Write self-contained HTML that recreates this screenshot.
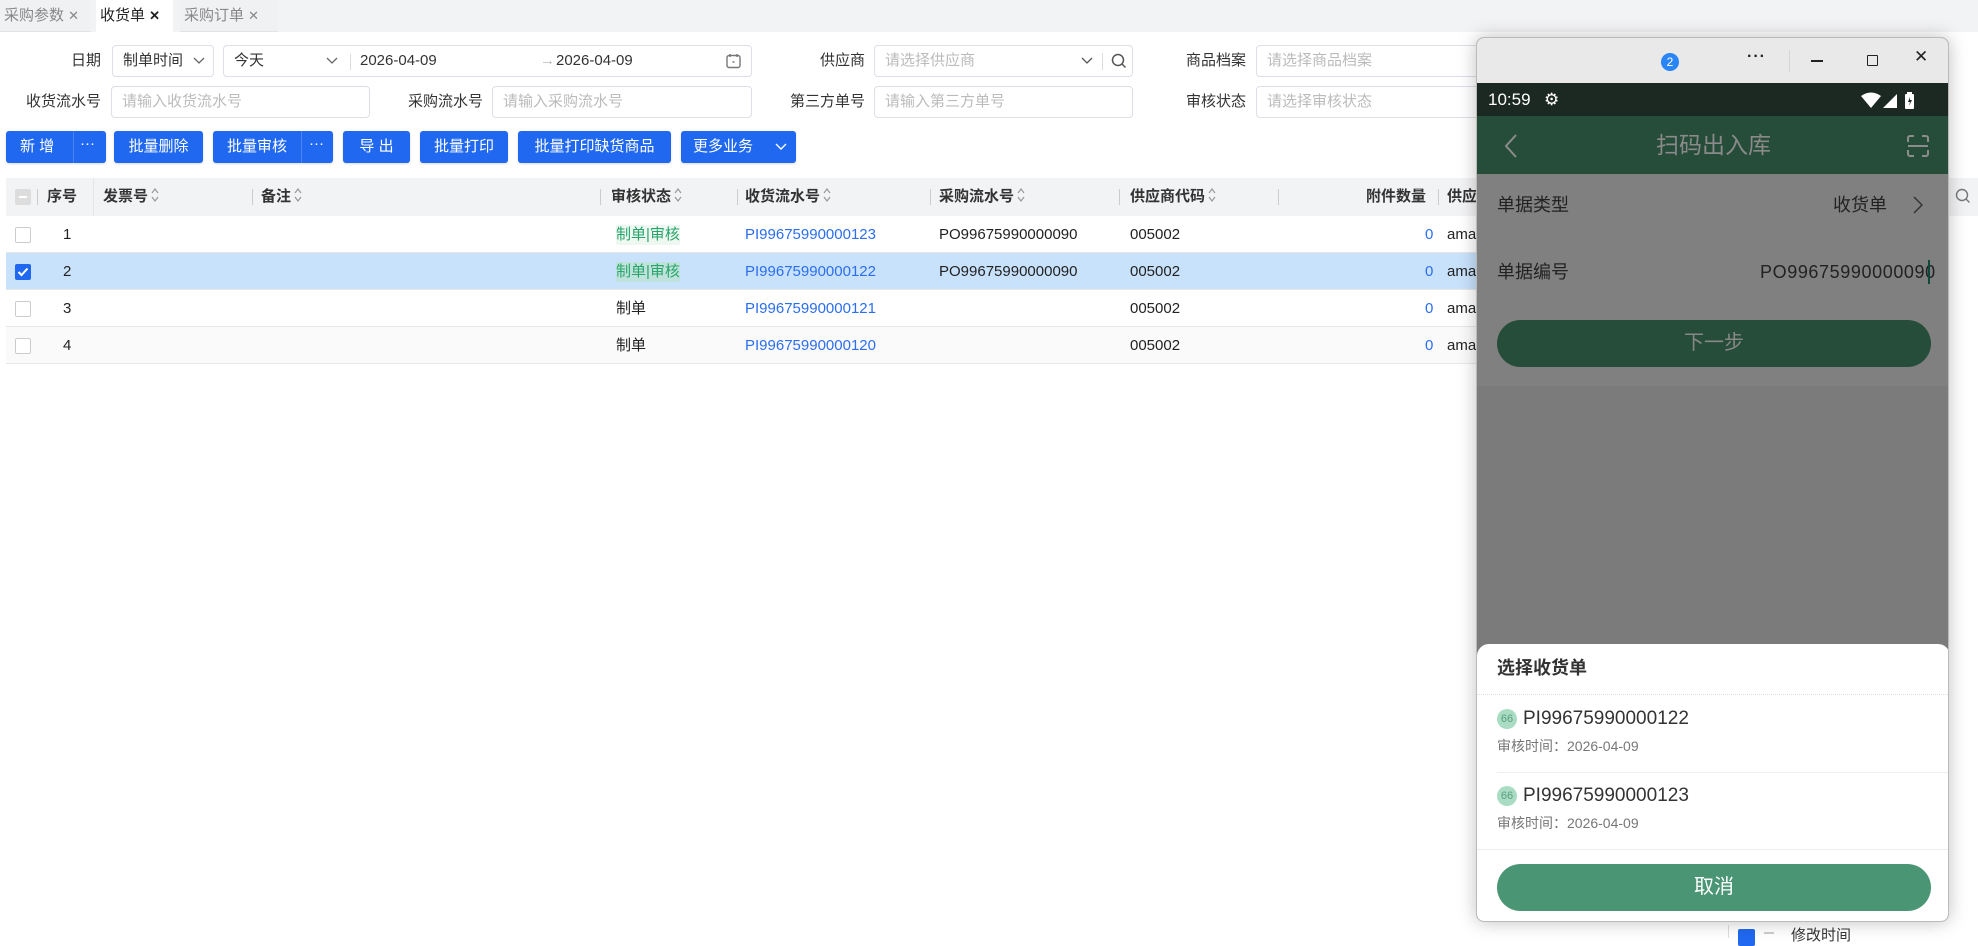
<!DOCTYPE html>
<html><head><meta charset="utf-8"><style>
*{box-sizing:border-box;margin:0;padding:0}
body{width:1978px;height:938px;overflow:hidden;background:#fff;font-family:"Liberation Sans","Noto Sans CJK SC",sans-serif;font-size:15px;color:#222;position:relative}
.a{position:absolute}
.tab{position:absolute;top:0;height:32px;line-height:32px;font-size:15px;padding-left:4px}
.lbl{position:absolute;text-align:right;font-size:15px;color:#333;line-height:32px}
.inp{position:absolute;height:32px;border:1px solid #dcdfe6;border-radius:4px;font-size:15px;line-height:30px;padding-left:10px;color:#bbb;background:#fff}
.btn{position:absolute;top:131px;height:32px;background:#2068f0;color:#fff;border-radius:3px;font-size:15px;line-height:32px;text-align:center;box-shadow:0 1px 2px rgba(0,0,0,.15)}
.th{position:absolute;top:178px;line-height:38px;font-weight:bold;font-size:15px;color:#333}
.dv{position:absolute;top:189px;width:1px;height:16px;background:#ccc}
.row{position:absolute;left:6px;width:1470px;height:37px;border-bottom:1px solid #e8e8e8}
.c{position:absolute;line-height:37px;font-size:15px}
.cb{position:absolute;left:9px;top:11px;width:16px;height:16px;border:1px solid #ccc;border-radius:2px;background:#fff}
.blue{color:#2b6ef0}
.grn{color:#27a56a;background:#eef8f1}
.srt{display:inline-block;width:10px;height:18px;vertical-align:-3px;margin-left:2px}
</style></head><body>
<svg width="0" height="0" style="position:absolute"><defs><symbol id="s" viewBox="0 0 10 18"><path d="M2 7l3-4 3 4M2 11l3 4 3-4" fill="none" stroke="#999" stroke-width="1.2"/></symbol></defs></svg>
<div class="a" style="left:0;top:0;width:1978px;height:32px;background:#f2f3f5"></div>
<div class="tab" style="left:0;width:91px;background:#f0f1f3;color:#888;border-bottom:1px solid #e4e4e4">采购参数 <span style="font-size:13px">✕</span></div>
<div class="tab" style="left:96px;width:77px;background:#fff;color:#222">收货单 <b style="font-size:13px">✕</b></div>
<div class="tab" style="left:180px;width:98px;background:#f0f1f3;color:#888;border-bottom:1px solid #e4e4e4">采购订单 <span style="font-size:13px">✕</span></div>

<div class="lbl" style="left:40px;top:45px;width:61px">日期</div>
<div class="inp" style="left:112px;top:45px;width:102px;color:#333">制单时间 <svg style="position:absolute;left:80px;top:11px" width="12" height="8" viewBox="0 0 12 8"><path d="M1 1l5 5 5-5" fill="none" stroke="#666" stroke-width="1.3"/></svg></div>
<div class="inp" style="left:223px;top:45px;width:529px;color:#333">今天<svg style="position:absolute;left:102px;top:11px" width="12" height="8" viewBox="0 0 12 8"><path d="M1 1l5 5 5-5" fill="none" stroke="#666" stroke-width="1.3"/></svg><span style="position:absolute;left:126px;top:8px;width:1px;height:16px;background:#ddd"></span><span style="position:absolute;left:136px">2026-04-09</span><span style="position:absolute;left:316px;color:#bbb">→</span><span style="position:absolute;left:332px">2026-04-09</span><svg style="position:absolute;left:502px;top:7px" width="15" height="16" viewBox="0 0 15 16"><rect x="1" y="2.5" width="13" height="12" rx="2" fill="none" stroke="#777" stroke-width="1.4"/><path d="M4 1v3M11 1v3M6.5 9h2" stroke="#777" stroke-width="1.4"/></svg></div>
<div class="lbl" style="left:800px;top:45px;width:65px">供应商</div>
<div class="inp" style="left:874px;top:45px;width:259px">请选择供应商<svg style="position:absolute;left:206px;top:11px" width="12" height="8" viewBox="0 0 12 8"><path d="M1 1l5 5 5-5" fill="none" stroke="#555" stroke-width="1.3"/></svg><span style="position:absolute;left:227px;top:7px;width:1px;height:17px;background:#ddd"></span><svg style="position:absolute;left:236px;top:7px" width="16" height="16" viewBox="0 0 16 16"><circle cx="7" cy="7" r="5.5" fill="none" stroke="#555" stroke-width="1.5"/><path d="M11 11l3.5 3.5" stroke="#555" stroke-width="1.5"/></svg></div>
<div class="lbl" style="left:1170px;top:45px;width:76px">商品档案</div>
<div class="inp" style="left:1256px;top:45px;width:260px">请选择商品档案</div>
<div class="lbl" style="left:10px;top:86px;width:91px">收货流水号</div>
<div class="inp" style="left:111px;top:86px;width:259px">请输入收货流水号</div>
<div class="lbl" style="left:390px;top:86px;width:93px">采购流水号</div>
<div class="inp" style="left:492px;top:86px;width:260px">请输入采购流水号</div>
<div class="lbl" style="left:770px;top:86px;width:95px">第三方单号</div>
<div class="inp" style="left:874px;top:86px;width:259px">请输入第三方单号</div>
<div class="lbl" style="left:1170px;top:86px;width:76px">审核状态</div>
<div class="inp" style="left:1256px;top:86px;width:260px">请选择审核状态</div>

<div class="btn" style="left:6px;width:100px"><span style="position:absolute;left:14px">新 增</span><span style="position:absolute;left:67px;top:0;width:1px;height:32px;background:#4a84f2"></span><span style="position:absolute;left:74px;top:-3px">···</span></div>
<div class="btn" style="left:114px;width:89px">批量删除</div>
<div class="btn" style="left:213px;width:120px"><span style="position:absolute;left:14px">批量审核</span><span style="position:absolute;left:88px;top:0;width:1px;height:32px;background:#4a84f2"></span><span style="position:absolute;left:96px;top:-3px">···</span></div>
<div class="btn" style="left:343px;width:67px">导 出</div>
<div class="btn" style="left:420px;width:88px">批量打印</div>
<div class="btn" style="left:518px;width:153px">批量打印缺货商品</div>
<div class="btn" style="left:681px;width:115px;text-align:left;padding-left:12px">更多业务<svg style="position:absolute;left:94px;top:12px" width="12" height="8" viewBox="0 0 12 8"><path d="M1 1l5 5 5-5" fill="none" stroke="#fff" stroke-width="1.4"/></svg></div>

<div class="a" style="left:6px;top:178px;width:1972px;height:38px;background:#f2f3f5"></div>
<div class="a" style="left:15px;top:189px;width:16px;height:16px;background:#ddd;border-radius:2px"><div style="position:absolute;left:4px;top:7px;width:8px;height:2px;background:#fff"></div></div>
<div class="dv" style="left:37px"></div>
<div class="th" style="left:47px">序号</div>
<div class="a" style="left:93px;top:178px;width:1px;height:186px;background:#e6e6e6"></div>
<div class="th" style="left:103px">发票号<svg class="srt"><use href="#s"/></svg></div>
<div class="dv" style="left:252px"></div><div class="th" style="left:261px">备注<svg class="srt"><use href="#s"/></svg></div>
<div class="dv" style="left:600px"></div><div class="th" style="left:611px">审核状态<svg class="srt"><use href="#s"/></svg></div>
<div class="dv" style="left:737px"></div><div class="th" style="left:745px">收货流水号<svg class="srt"><use href="#s"/></svg></div>
<div class="dv" style="left:930px"></div><div class="th" style="left:939px">采购流水号<svg class="srt"><use href="#s"/></svg></div>
<div class="dv" style="left:1119px"></div><div class="th" style="left:1130px">供应商代码<svg class="srt"><use href="#s"/></svg></div>
<div class="dv" style="left:1278px"></div>
<div class="th" style="left:1366px">附件数量</div>
<div class="dv" style="left:1438px"></div><div class="th" style="left:1447px">供应</div>

<div class="row" style="top:216px;background:#fff"><div class="cb"></div><div class="c" style="left:57px">1</div><div class="c grn" style="left:610px;line-height:20px;top:9px">制单|审核</div><div class="c blue" style="left:739px">PI99675990000123</div><div class="c" style="left:933px">PO99675990000090</div><div class="c" style="left:1124px">005002</div><div class="c blue" style="left:1419px">0</div><div class="c" style="left:1441px">ama</div></div>
<div class="row" style="top:253px;background:#c9e2fb"><div class="cb" style="background:#2068f0;border-color:#2068f0"><svg width="14" height="14" viewBox="0 0 14 14" style="position:absolute;left:0;top:0"><path d="M2.5 7l3 3 6-6.5" fill="none" stroke="#fff" stroke-width="2"/></svg></div><div class="c" style="left:57px">2</div><div class="c grn" style="left:610px;line-height:20px;top:9px;background:#bfe3dc">制单|审核</div><div class="c blue" style="left:739px">PI99675990000122</div><div class="c" style="left:933px">PO99675990000090</div><div class="c" style="left:1124px">005002</div><div class="c blue" style="left:1419px">0</div><div class="c" style="left:1441px">ama</div></div>
<div class="row" style="top:290px;background:#fff"><div class="cb"></div><div class="c" style="left:57px">3</div><div class="c" style="left:610px">制单</div><div class="c blue" style="left:739px">PI99675990000121</div><div class="c" style="left:1124px">005002</div><div class="c blue" style="left:1419px">0</div><div class="c" style="left:1441px">ama</div></div>
<div class="row" style="top:327px;background:#fafafa"><div class="cb"></div><div class="c" style="left:57px">4</div><div class="c" style="left:610px">制单</div><div class="c blue" style="left:739px">PI99675990000120</div><div class="c" style="left:1124px">005002</div><div class="c blue" style="left:1419px">0</div><div class="c" style="left:1441px">ama</div></div>

<svg class="a" style="left:1955px;top:188px" width="16" height="16" viewBox="0 0 16 16"><circle cx="7" cy="7" r="5.5" fill="none" stroke="#777" stroke-width="1.4"/><path d="M11 11l3.5 3.5" stroke="#777" stroke-width="1.4"/></svg>
<div class="a" style="left:1728px;top:925px;width:1px;height:13px;background:#ddd"></div>
<div class="a" style="left:1738px;top:929px;width:17px;height:17px;background:#2068f0;border-radius:2px"></div>
<div class="a" style="left:1764px;top:932px;width:10px;height:2px;background:#ccc"></div>
<div class="a" style="left:1791px;top:924px;font-size:15px;color:#333">修改时间</div>

<div class="a" style="left:1476px;top:37px;width:473px;height:885px;border-radius:8px;overflow:hidden;box-shadow:0 0 18px rgba(0,0,0,.25);background:#7b7b7b;border:1px solid #bbb">
  <div class="a" style="left:0;top:0;width:473px;height:45px;background:#e9e9e9"></div>
  <div class="a" style="left:184px;top:15px;width:18px;height:18px;border-radius:50%;background:#2a85f7;color:#fff;font-size:12px;text-align:center;line-height:18px">2</div>
  <div class="a" style="left:270px;top:10px;font-size:16px;letter-spacing:1px;color:#222;font-weight:bold">···</div>
  <div class="a" style="left:312px;top:12px;width:1px;height:22px;background:#d6d6d6"></div>
  <div class="a" style="left:334px;top:22px;width:12px;height:1.5px;background:#222"></div>
  <div class="a" style="left:390px;top:17px;width:11px;height:11px;border:1.5px solid #222;border-radius:1px"></div>
  <div class="a" style="left:437px;top:9px;font-size:17px;color:#222">✕</div>
  <div class="a" style="left:0;top:45px;width:473px;height:33px;background:#1b2922"></div>
  <div class="a" style="left:11px;top:48px;font-size:17px;color:#fff;line-height:27px">10:59</div>
  <div class="a" style="left:67px;top:50px;font-size:17px;color:#fff;line-height:24px">⚙</div>
  <svg class="a" style="left:384px;top:54px" width="60" height="18" viewBox="0 0 60 18"><path d="M0 4 Q10 -3 20 4 L10 16Z" fill="#fff"/><path d="M22 16 L36 2 L36 16Z" fill="#fff"/><rect x="44" y="2" width="9" height="15" rx="1" fill="#fff"/><rect x="46" y="0" width="5" height="2" fill="#fff"/><path d="M49 5l-2 5h2l-1 4 3-6h-2z" fill="#1b2922"/></svg>
  <div class="a" style="left:0;top:78px;width:473px;height:58px;background:#264c3a"></div>
  <svg class="a" style="left:27px;top:96px" width="14" height="24" viewBox="0 0 14 24"><path d="M12 1L2 12l10 11" fill="none" stroke="#8c8c8c" stroke-width="2"/></svg>
  <div class="a" style="left:0;top:78px;width:473px;text-align:center;line-height:58px;font-size:23px;color:#8a8a8a">扫码出入库</div>
  <svg class="a" style="left:430px;top:97px" width="22" height="22" viewBox="0 0 22 22"><path d="M1 7V3a2 2 0 0 1 2-2h4M15 1h4a2 2 0 0 1 2 2v4M21 15v4a2 2 0 0 1-2 2h-4M7 21H3a2 2 0 0 1-2-2v-4M1 11h20" fill="none" stroke="#8c8c8c" stroke-width="2"/></svg>
  <div class="a" style="left:0;top:136px;width:473px;height:212px;background:#808080"></div>
  <div class="a" style="left:20px;top:154px;font-size:18px;color:#222;line-height:26px">单据类型</div>
  <div class="a" style="left:356px;top:154px;font-size:18px;color:#222;line-height:26px">收货单</div>
  <svg class="a" style="left:436px;top:158px" width="10" height="18" viewBox="0 0 10 18"><path d="M1 1l8 8-8 8" fill="none" stroke="#333" stroke-width="1.5"/></svg>
  <div class="a" style="left:20px;top:221px;font-size:18px;color:#222;line-height:26px">单据编号</div>
  <div class="a" style="left:283px;top:221px;font-size:18px;color:#222;line-height:26px;letter-spacing:0.6px">PO99675990000090</div>
  <div class="a" style="left:451px;top:222px;width:2px;height:24px;background:#0d4a3a"></div>
  <div class="a" style="left:20px;top:282px;width:434px;height:47px;border-radius:24px;background:#264c3a;text-align:center;line-height:47px;font-size:20px;color:#888">下一步</div>
  <div class="a" style="left:0;top:606px;width:473px;height:279px;background:#fff;border-radius:12px 12px 8px 8px">
    <div class="a" style="left:20px;top:11px;font-size:18px;font-weight:bold;color:#333;line-height:26px">选择收货单</div>
    <div class="a" style="left:0;top:50px;width:473px;border-top:1px dotted #ddd"></div>
    <div class="a" style="left:20px;top:65px;width:20px;height:20px;border-radius:50%;background:#a9dcc3;color:#5a9e7e;font-size:11px;text-align:center;line-height:20px">66</div>
    <div class="a" style="left:46px;top:62px;font-size:19px;color:#333;line-height:26px">PI99675990000122</div>
    <div class="a" style="left:20px;top:92px;font-size:14px;color:#777;line-height:20px">审核时间：2026-04-09</div>
    <div class="a" style="left:20px;top:128px;width:453px;border-top:1px solid #f0f0f0"></div>
    <div class="a" style="left:20px;top:142px;width:20px;height:20px;border-radius:50%;background:#a9dcc3;color:#5a9e7e;font-size:11px;text-align:center;line-height:20px">66</div>
    <div class="a" style="left:46px;top:139px;font-size:19px;color:#333;line-height:26px">PI99675990000123</div>
    <div class="a" style="left:20px;top:169px;font-size:14px;color:#777;line-height:20px">审核时间：2026-04-09</div>
    <div class="a" style="left:0;top:205px;width:473px;border-top:1px solid #eee"></div>
    <div class="a" style="left:20px;top:220px;width:434px;height:47px;border-radius:24px;background:#4a9674;text-align:center;line-height:47px;font-size:20px;color:#fff">取消</div>
  </div>
</div>
</body></html>
